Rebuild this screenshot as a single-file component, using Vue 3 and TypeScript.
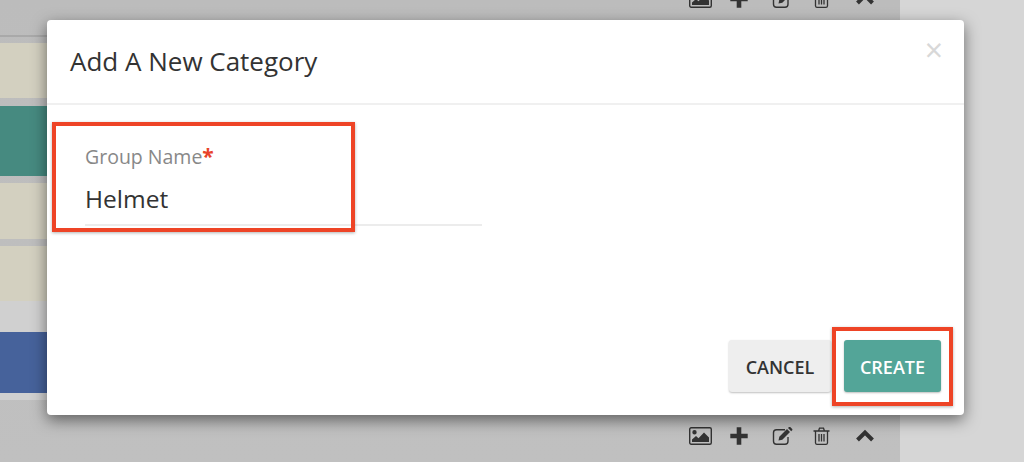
<script setup lang="ts">
interface ToolIcon {
  name: string;
  box: string;
  stroke?: string;
  width?: number;
  fill?: string;
}

const rows = ["beige-a", "teal", "beige-b", "beige-c", "gap", "blue"];

const icons: ToolIcon[] = [
  {
    name: "image",
    box: "0 0 23 18",
    stroke: "M2.200.7h18.600a1.500 1.500 0 0 1 1.500 1.500v13.600a1.500 1.500 0 0 1-1.500 1.500H2.200a1.500 1.500 0 0 1-1.500-1.500V2.200A1.500 1.500 0 0 1 2.200.7z",
    width: 1.4,
    fill: "M5.500 3a2.200 2.200 0 1 1 0 4.400 2.200 2.200 0 0 1 0-4.400zM3 15v-2.500l4-3.500 2.500 2.300L15 5.500l5 5V15z",
  },
  {
    name: "plus",
    box: "0 0 18 18",
    stroke: "M9 .3v17.400M.3 9h17.400",
    width: 4.6,
  },
  {
    name: "edit",
    box: "0 0 21 18",
    stroke: "M13 2.700H4.500a3 3 0 0 0-3 3v8.600a3 3 0 0 0 3 3h8.500a3 3 0 0 0 3-3V10",
    width: 1.4,
    fill: "M6.500 13.500l.8-3.800L15 2l3 3-7.700 7.700zM16 1l1-1a1 1 0 0 1 1.200 0l2 2a1 1 0 0 1 0 1.200l-1 1z",
  },
  {
    name: "trash",
    box: "0 0 17 18",
    stroke: "M.5 4h16M5.500 4l1-2.800h4l1 2.800M2.500 4v12a1.500 1.500 0 0 0 1.500 1.300h9a1.500 1.500 0 0 0 1.500-1.300V4M6 7v7.500M8.500 7v7.500M11 7v7.500",
    width: 1.3,
  },
  {
    name: "chevron",
    box: "0 0 20 18",
    stroke: "M2.500 13 10 5.500 17.500 13",
    width: 4,
  },
];
</script>

<template>
  <div class="page">
    <div class="panel">
      <div class="toolbar toolbar--top">
        <svg v-for="icon in icons" :key="icon.name" :class="['icon', 'icon--' + icon.name]" :viewBox="icon.box">
          <path v-if="icon.stroke" :d="icon.stroke" fill="none" stroke="currentColor" :stroke-width="icon.width" />
          <path v-if="icon.fill" :d="icon.fill" fill="currentColor" />
        </svg>
      </div>
      <div class="divider" />
      <div v-for="row in rows" :key="row" :class="['row', 'row--' + row]" />
      <div class="toolbar toolbar--bottom">
        <svg v-for="icon in icons" :key="icon.name" :class="['icon', 'icon--' + icon.name]" :viewBox="icon.box">
          <path v-if="icon.stroke" :d="icon.stroke" fill="none" stroke="currentColor" :stroke-width="icon.width" />
          <path v-if="icon.fill" :d="icon.fill" fill="currentColor" />
        </svg>
      </div>
    </div>

    <div class="modal">
      <header class="modal__header">
        <h2 class="modal__title">Add A New Category</h2>
        <span class="modal__close">×</span>
      </header>
      <div class="modal__body">
        <label class="field">
          <span class="field__label">Group Name<em>*</em></span>
          <span class="field__value">Helmet</span>
        </label>
      </div>
      <footer class="modal__footer">
        <button type="button" class="btn btn--cancel">CANCEL</button>
        <button type="button" class="btn btn--create">CREATE</button>
      </footer>
      <div class="mark mark--field" />
      <div class="mark mark--create" />
    </div>
  </div>
</template>

<style>
html,
body {
  margin: 0;
  overflow: hidden;
}
</style>

<style scoped>
.page {
  position: relative;
  width: 1024px;
  height: 462px;
  overflow: hidden;
  background: #d6d6d6;
  font-family: "Open Sans", "Liberation Sans", sans-serif;
}

.panel {
  display: flow-root;
  width: 900px;
  height: 100%;
  background: linear-gradient(#bcbcbc, #c0c0c0);
}

.toolbar {
  display: flex;
  align-items: center;
  justify-content: flex-end;
  height: 18px;
  padding-right: 25px;
  color: #333333;
}

.toolbar--top {
  margin-top: -10px;
}

.toolbar--bottom {
  margin-top: 27px;
}

.icon {
  display: block;
  height: 18px;
}

.icon--image {
  width: 23px;
  margin-right: 18px;
}

.icon--plus {
  width: 18px;
  margin-right: 24px;
}

.icon--edit {
  width: 21px;
  margin-right: 20px;
}

.icon--trash {
  width: 17px;
  margin-right: 25px;
}

.icon--chevron {
  width: 20px;
}

.divider {
  height: 2px;
  margin-top: 27px;
  background: #a9a9a9;
}

.row--beige-a {
  height: 55px;
  margin-top: 6px;
  background: #d3d0c0;
}

.row--teal {
  height: 70px;
  margin-top: 8px;
  background: #468a80;
}

.row--beige-b {
  height: 56px;
  margin-top: 7px;
  background: #d3d0c0;
}

.row--beige-c {
  height: 55px;
  margin-top: 7px;
  background: #d3d0c0;
}

.row--gap {
  height: 31px;
  background: #d0d0d0;
}

.row--blue {
  height: 61px;
  border-bottom: 7px solid #d0d0d0;
  background: #46629b;
}

.modal {
  position: absolute;
  top: 20px;
  left: 47px;
  display: flex;
  flex-direction: column;
  box-sizing: border-box;
  width: 917px;
  height: 395px;
  border-radius: 4px;
  background: #ffffff;
  box-shadow: 0 5px 15px rgba(0, 0, 0, 0.5);
}

.modal__header {
  display: flex;
  align-items: flex-start;
  justify-content: space-between;
  box-sizing: border-box;
  height: 85px;
  padding: 23px 21px 0 23px;
  border-bottom: 2px solid #f0f0f0;
}

.modal__title {
  margin: 0;
  color: #333333;
  font-size: 26px;
  font-weight: 400;
  line-height: 36px;
}

.modal__close {
  margin-top: -3px;
  color: #d8d8d8;
  font-size: 32px;
  line-height: 20px;
}

.modal__body {
  flex: 1;
  padding: 0 38px;
}

.field {
  display: flex;
  flex-direction: column;
  box-sizing: border-box;
  width: 397px;
  height: 121px;
  padding-top: 40px;
  border-bottom: 2px solid #ececec;
}

.field__label {
  height: 24px;
  color: #888888;
  font-size: 19.500px;
  line-height: 24px;
}

.field__label em {
  color: #e8442a;
  font-size: 21px;
  font-style: normal;
  font-weight: 700;
  line-height: 1;
}

.field__value {
  margin-top: 12px;
  color: #333333;
  font-size: 24.500px;
  line-height: 36px;
}

.modal__footer {
  display: flex;
  justify-content: flex-end;
  gap: 13px;
  padding: 0 23px 23px 0;
}

.btn {
  height: 52px;
  padding: 2px 0 0;
  border: 0;
  border-radius: 3px;
  font-family: inherit;
  font-size: 18px;
  font-weight: 600;
  cursor: pointer;
}

.btn--cancel {
  width: 102px;
  color: #333333;
  background: #eeeeee;
  box-shadow: 0 1px 2px rgba(0, 0, 0, 0.25);
}

.btn--create {
  width: 97px;
  color: #ffffff;
  background: #53a598;
  box-shadow: 0 1px 2px rgba(0, 0, 0, 0.25);
}

.mark {
  position: absolute;
  box-sizing: border-box;
  border: 4px solid #ee4426;
  box-shadow: 0 1px 3px rgba(0, 0, 0, 0.3);
}

.mark--field {
  top: 102px;
  left: 5px;
  width: 303px;
  height: 110px;
}

.mark--create {
  top: 307px;
  left: 785px;
  width: 121px;
  height: 79px;
}
</style>
